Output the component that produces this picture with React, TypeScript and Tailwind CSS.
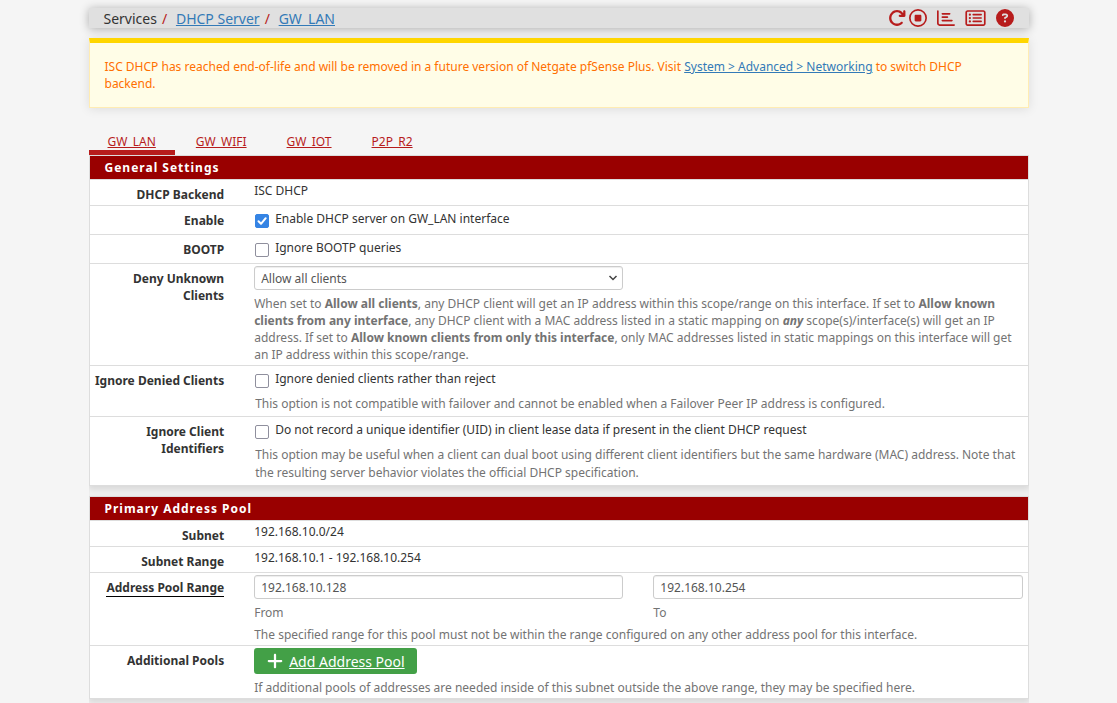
import { FC, ReactNode } from 'react';
import {
  FaArrowRotateRight,
  FaCircleQuestion,
  FaPlus,
  FaRegChartBar,
  FaRegCircleStop,
  FaRegRectangleList,
} from 'react-icons/fa6';

const tabs = ['GW_LAN', 'GW_WIFI', 'GW_IOT', 'P2P_R2'];

const Panel: FC<{ title: string; children: ReactNode }> = ({ title, children }) => (
  <section className="mb-[10px] border border-[#ddd] bg-white shadow-[0_3px_6px_rgba(0,0,0,0.1)]">
    <h2 className="bg-[#990000] px-[15px] py-[3px] text-[12px] leading-[17px] font-bold tracking-[1px] text-white">
      {title}
    </h2>
    {children}
  </section>
);

interface RowProps {
  label: string;
  htmlFor?: string;
  required?: boolean;
  children: ReactNode;
}

const Row: FC<RowProps> = ({ label, htmlFor, required, children }) => {
  const text = required ? <span className="border-b border-black">{label}</span> : label;

  return (
    <div className="border-t border-[#ddd]">
      <div className="-mx-[10px] flex">
        <div className="w-1/6 shrink-0 px-[15px] pt-[6px] pb-[2px] text-right font-bold">
          {htmlFor ? <label htmlFor={htmlFor}>{text}</label> : text}
        </div>
        <div className="min-w-0 flex-1 px-[15px]">{children}</div>
      </div>
    </div>
  );
};

const StaticText: FC<{ children: ReactNode }> = ({ children }) => <p className="pt-[2px]">{children}</p>;

const Help: FC<{ children: ReactNode }> = ({ children }) => (
  <p className="mt-[5px] pb-[2px] text-[#737373]">{children}</p>
);

interface CheckboxProps {
  id: string;
  label: string;
  defaultChecked?: boolean;
  help?: string;
}

const Checkbox: FC<CheckboxProps> = ({ id, label, defaultChecked, help }) => (
  <>
    <div className="flex h-[28px] pt-[4px]">
      <div className="relative mt-[4px] ml-px size-[14px]">
        <input
          id={id}
          type="checkbox"
          defaultChecked={defaultChecked}
          className="peer block size-[14px] appearance-none rounded-[2px] border border-[#8f8f9d] bg-white checked:border-[#3584e4] checked:bg-[#3584e4]"
        />
        <svg
          viewBox="0 0 14 14"
          className="pointer-events-none absolute inset-0 hidden size-[14px] peer-checked:block"
          fill="none"
          stroke="#fff"
          strokeWidth="2"
          strokeLinecap="round"
          strokeLinejoin="round"
        >
          <path d="M3.5 7.3 6 9.8 10.7 4.2" />
        </svg>
      </div>
      <label htmlFor={id} className="pl-[6px]">
        {label}
      </label>
    </div>
    {help && <p className="pt-px pb-[3px] pl-px leading-[18px] text-[#737373]">{help}</p>}
  </>
);

const inputClass =
  'block h-[24px] w-full appearance-none rounded-[3px] border border-[#ccc] bg-white px-[6px] text-[#555] shadow-[inset_0_1px_1px_rgba(0,0,0,0.075)]';

const App: FC = () => {
  return (
    <div className="min-h-screen bg-[#f5f5f5] font-['Noto_Sans',sans-serif] text-[12px] leading-[17px] text-[#333]">
      <div className="mx-auto max-w-[970px] px-[15px] pt-[8px]">
        <header className="flex h-[20px] items-center justify-between bg-[#e0e0e0] px-[15px] shadow-[0_1px_10px_rgba(0,0,0,0.3)]">
          <nav className="flex pt-[2px] text-[14px] leading-[20px]">
            <span>Services</span>
            <span className="w-[19px] pl-[5px] text-[#b71c1c]">/</span>
            <a href="#dhcp" className="text-[#337ab7] underline">DHCP Server</a>
            <span className="w-[19px] pl-[5px] text-[#b71c1c]">/</span>
            <a href="#gw_lan" className="text-[#337ab7] underline">GW_LAN</a>
          </nav>
          <div className="flex items-center text-[18px] text-[#b71c1c]">
            <button type="button" aria-label="Restart service"><FaArrowRotateRight /></button>
            <button type="button" aria-label="Stop service" className="ml-[3px]"><FaRegCircleStop /></button>
            <a href="#status" aria-label="Status" className="ml-[10px]"><FaRegChartBar /></a>
            <a href="#logs" aria-label="Logs" className="ml-[10px]"><FaRegRectangleList className="h-[18px] w-[21px]" /></a>
            <a href="#help" aria-label="Help" className="ml-[10px]"><FaCircleQuestion /></a>
          </div>
        </header>

        <div className="mt-[10px] border border-t-[5px] border-[#ffecb3] border-t-[#ffd600] bg-[#fffde7] px-[15px] py-[15px] text-[#ff6f00] shadow-[0_1px_10px_rgba(0,0,0,0.1)]">
          ISC DHCP has reached end-of-life and will be removed in a future version of Netgate pfSense Plus. Visit{' '}
          <a href="#networking" className="text-[#337ab7] underline">System &gt; Advanced &gt; Networking</a> to switch DHCP
          backend.
        </div>

        <nav className="mt-[25px] flex gap-[2px]">
          {tabs.map((tab, i) => (
            <a
              key={tab}
              href={`#${tab}`}
              className={`border-b-[5px] px-[19px] text-[#b71c1c] underline ${i === 0 ? 'border-[#b71c1c]' : 'border-transparent'}`}
            >
              {tab}
            </a>
          ))}
        </nav>

        <form className="flow-root overflow-clip bg-[#efefef]">
          <Panel title="General Settings">
            <Row label="DHCP Backend">
              <StaticText>ISC DHCP</StaticText>
            </Row>
            <Row label="Enable" htmlFor="enable">
              <Checkbox id="enable" label="Enable DHCP server on GW_LAN interface" defaultChecked />
            </Row>
            <Row label="BOOTP" htmlFor="bootp">
              <Checkbox id="bootp" label="Ignore BOOTP queries" />
            </Row>
            <Row label="Deny Unknown Clients" htmlFor="denyunknown">
              <div className="relative mt-[2px] w-[calc(50%-15px)]">
                <select id="denyunknown" className={inputClass}>
                  <option>Allow all clients</option>
                  <option>Allow known clients from any interface</option>
                  <option>Allow known clients from only this interface</option>
                </select>
                <svg
                  viewBox="0 0 10 6"
                  className="pointer-events-none absolute top-[9px] right-[5px] h-[6px] w-[10px]"
                  fill="none"
                  stroke="#444"
                  strokeWidth="1.5"
                >
                  <path d="M1.5 1 5 4.5 8.5 1" />
                </svg>
              </div>
              <Help>
                When set to <b>Allow all clients</b>, any DHCP client will get an IP address within this scope/range on
                this interface. If set to <b>Allow known clients from any interface</b>, any DHCP client with a MAC
                address listed in a static mapping on <b><i>any</i></b> scope(s)/interface(s) will get an IP address. If
                set to <b>Allow known clients from only this interface</b>, only MAC addresses listed in static mappings
                on this interface will get an IP address within this scope/range.
              </Help>
            </Row>
            <Row label="Ignore Denied Clients" htmlFor="ignoredenied">
              <Checkbox
                id="ignoredenied"
                label="Ignore denied clients rather than reject"
                help="This option is not compatible with failover and cannot be enabled when a Failover Peer IP address is configured."
              />
            </Row>
            <Row label="Ignore Client Identifiers" htmlFor="ignoreuids">
              <Checkbox
                id="ignoreuids"
                label="Do not record a unique identifier (UID) in client lease data if present in the client DHCP request"
                help="This option may be useful when a client can dual boot using different client identifiers but the same hardware (MAC) address. Note that the resulting server behavior violates the official DHCP specification."
              />
            </Row>
          </Panel>

          <Panel title="Primary Address Pool">
            <Row label="Subnet">
              <StaticText>192.168.10.0/24</StaticText>
            </Row>
            <Row label="Subnet Range">
              <StaticText>192.168.10.1 - 192.168.10.254</StaticText>
            </Row>
            <Row label="Address Pool Range" htmlFor="range_from" required>
              <div className="grid grid-cols-2 gap-[30px] pt-[2px] text-[#737373]">
                <div>
                  <input id="range_from" type="text" defaultValue="192.168.10.128" className={inputClass} />
                  <label htmlFor="range_from" className="mt-[5px] block">From</label>
                </div>
                <div>
                  <input id="range_to" type="text" defaultValue="192.168.10.254" className={inputClass} />
                  <label htmlFor="range_to" className="mt-[5px] block">To</label>
                </div>
              </div>
              <Help>
                The specified range for this pool must not be within the range configured on any other address pool for
                this interface.
              </Help>
            </Row>
            <Row label="Additional Pools">
              <button
                type="button"
                className="mt-[2px] flex h-[26px] items-center gap-[5px] rounded-[3px] bg-[#43a047] px-[12px] text-[14px] text-white"
              >
                <FaPlus className="size-[18px]" />
                <span className="underline">Add Address Pool</span>
              </button>
              <Help>
                If additional pools of addresses are needed inside of this subnet outside the above range, they may be
                specified here.
              </Help>
            </Row>
          </Panel>
        </form>
      </div>
    </div>
  );
};

export default App;
